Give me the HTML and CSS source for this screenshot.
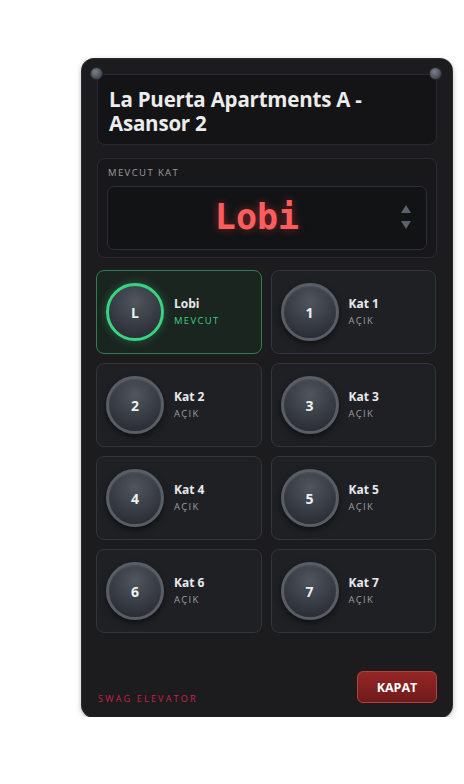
FILE: index.html
```html
<!DOCTYPE html>
<html lang="tr">
<head>
    <meta charset="UTF-8">
    <meta name="viewport" content="width=device-width, initial-scale=1.0">
    <title>Asansor Paneli</title>
    <link rel="stylesheet" href="styles.css">
</head>
<body>
    <div class="wrap">
        <div class="panel">
            <span class="screw left"></span>
            <span class="screw right"></span>

            <div class="header">
                <h1>La Puerta Apartments A - Asansor 2</h1>
            </div>

            <div class="current">
                <div class="current-label">MEVCUT KAT</div>
                <div class="display">
                    <span class="display-text">Lobi</span>
                    <div class="arrows">
                        <span class="arrow up"></span>
                        <span class="arrow down"></span>
                    </div>
                </div>
            </div>

            <div class="floors">
                <div class="floor active">
                    <div class="knob">L</div>
                    <div class="floor-info">
                        <div class="floor-name">Lobi</div>
                        <div class="floor-state">MEVCUT</div>
                    </div>
                </div>
                <div class="floor">
                    <div class="knob">1</div>
                    <div class="floor-info">
                        <div class="floor-name">Kat 1</div>
                        <div class="floor-state">AÇIK</div>
                    </div>
                </div>
                <div class="floor">
                    <div class="knob">2</div>
                    <div class="floor-info">
                        <div class="floor-name">Kat 2</div>
                        <div class="floor-state">AÇIK</div>
                    </div>
                </div>
                <div class="floor">
                    <div class="knob">3</div>
                    <div class="floor-info">
                        <div class="floor-name">Kat 3</div>
                        <div class="floor-state">AÇIK</div>
                    </div>
                </div>
                <div class="floor">
                    <div class="knob">4</div>
                    <div class="floor-info">
                        <div class="floor-name">Kat 4</div>
                        <div class="floor-state">AÇIK</div>
                    </div>
                </div>
                <div class="floor">
                    <div class="knob">5</div>
                    <div class="floor-info">
                        <div class="floor-name">Kat 5</div>
                        <div class="floor-state">AÇIK</div>
                    </div>
                </div>
                <div class="floor">
                    <div class="knob">6</div>
                    <div class="floor-info">
                        <div class="floor-name">Kat 6</div>
                        <div class="floor-state">AÇIK</div>
                    </div>
                </div>
                <div class="floor">
                    <div class="knob">7</div>
                    <div class="floor-info">
                        <div class="floor-name">Kat 7</div>
                        <div class="floor-state">AÇIK</div>
                    </div>
                </div>
            </div>

            <div class="footer">
                <span class="brand">SWAG ELEVATOR</span>
                <button class="close-btn">KAPAT</button>
            </div>
        </div>
    </div>
</body>
</html>
```

FILE: styles.css
```css
body {
    margin: 0;
    background: #ffffff;
    font-family: 'Open Sans', 'Noto Sans', sans-serif;
}
.wrap {
    padding: 59px 0 0 82px;
}
.panel {
    position: relative;
    box-sizing: border-box;
    width: 370px;
    height: 658px;
    padding: 15px 15px 14px 15px;
    background: #1c1c1f;
    border-radius: 12px;
    box-shadow: 0 0 0 1px #2b2b2f, 0 2px 6px rgba(0,0,0,0.35);
    display: flex;
    flex-direction: column;
}
.screw {
    position: absolute;
    top: 9px;
    width: 11px;
    height: 11px;
    border-radius: 50%;
    background: radial-gradient(circle at 40% 35%, #7a818c, #454a53 70%);
    box-shadow: 0 0 0 1px #2a2c30;
}
.screw.left { left: 9px; }
.screw.right { right: 11px; }

.header {
    background: #141416;
    border: 1px solid #2a2a2e;
    border-radius: 8px;
    padding: 12px 11px 9px;
}
.header h1 {
    margin: 0;
    font-size: 20.5px;
    line-height: 24px;
    font-weight: 700;
    color: #ececec;
    letter-spacing: -0.2px;
}

.current {
    margin-top: 13px;
    background: #18181b;
    border: 1px solid #2c2c30;
    border-radius: 8px;
    padding: 8px 9px 7px;
}
.current-label {
    font-size: 9.5px;
    line-height: 12px;
    letter-spacing: 1.4px;
    color: #9a9ca2;
    margin-left: 1px;
}
.display {
    position: relative;
    margin-top: 7px;
    height: 62px;
    border: 1px solid #2e3035;
    border-radius: 7px;
    background: #121315;
    display: flex;
    align-items: center;
    justify-content: center;
}
.display-text {
    font-family: 'DejaVu Sans Mono', 'Liberation Mono', monospace;
    font-weight: 700;
    font-size: 35px;
    color: #ff5d5d;
    text-shadow: 0 0 8px rgba(255, 70, 70, 0.45);
    margin: -2px 20px 0 0;
}
.arrows {
    position: absolute;
    right: 15px;
    top: 18px;
    display: flex;
    flex-direction: column;
    gap: 8px;
}
.arrow {
    width: 0;
    height: 0;
    border-left: 5px solid transparent;
    border-right: 5px solid transparent;
}
.arrow.up { border-bottom: 8px solid #5b626c; }
.arrow.down { border-top: 8px solid #5b626c; }

.floors {
    margin-top: 12px;
    display: grid;
    grid-template-columns: 1fr 1fr;
    gap: 9px;
    margin-left: -1px;
    margin-right: 1px;
}
.floor {
    height: 84px;
    box-sizing: border-box;
    background: #1f2024;
    border: 1px solid #33353a;
    border-radius: 8px;
    padding: 0 9px;
    display: flex;
    align-items: center;
    gap: 10px;
}
.floor.active {
    background: #1b2520;
    border-color: #2f7d52;
}
.knob {
    box-sizing: border-box;
    width: 58px;
    height: 58px;
    border-radius: 50%;
    border: 3px solid #585d66;
    background: radial-gradient(circle at 50% 30%, #50555e, #2b2e35 80%);
    box-shadow: 0 3px 6px rgba(0,0,0,0.5), inset 0 1px 2px rgba(255,255,255,0.08);
    display: flex;
    align-items: center;
    justify-content: center;
    color: #eef0f2;
    font-weight: 700;
    font-size: 14px;
}
.floor.active .knob {
    border-color: #3ad283;
    box-shadow: 0 0 8px rgba(58, 210, 131, 0.35);
    color: #dff7ea;
}
.floor-name {
    font-size: 12px;
    font-weight: 700;
    color: #e8e9eb;
    line-height: 16px;
    margin-top: -2px;
}
.floor-state {
    margin-top: 2px;
    font-size: 9.5px;
    letter-spacing: 1.3px;
    color: #9a9da3;
}
.floor.active .floor-state {
    color: #3ccf85;
}

.footer {
    margin-top: auto;
    display: flex;
    justify-content: space-between;
    align-items: flex-end;
}
.brand {
    font-size: 9px;
    letter-spacing: 2.2px;
    color: #c8214a;
    margin: 0 0 -2px 1px;
}
.close-btn {
    width: 80px;
    height: 32px;
    border: 1px solid #b1403f;
    border-radius: 6px;
    background: linear-gradient(#962626, #6f1a1a);
    color: #ffffff;
    font-family: inherit;
    font-weight: 700;
    font-size: 12.5px;
    cursor: pointer;
}
```
